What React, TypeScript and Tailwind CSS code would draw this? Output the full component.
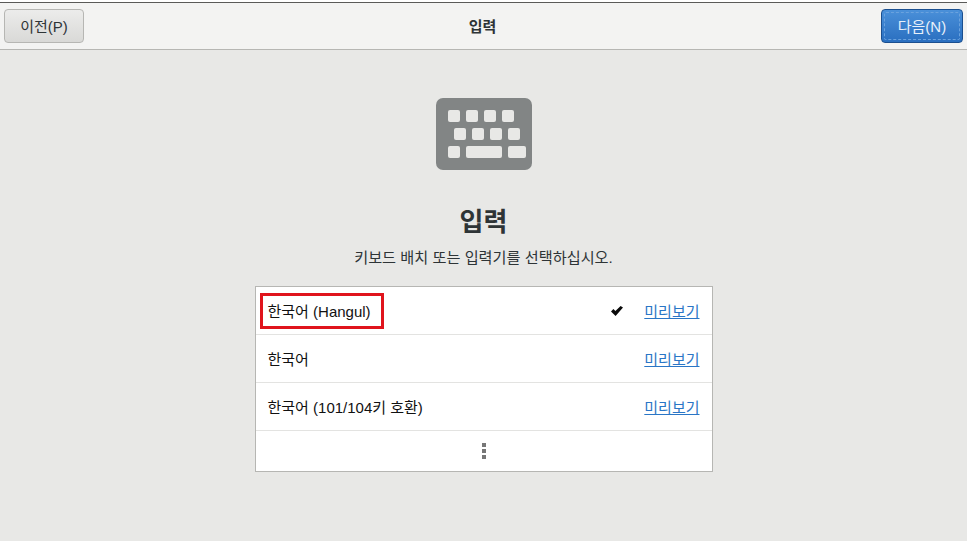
import React from 'react';

const FONT = "font-['Liberation_Sans','Noto_Sans_CJK_KR',sans-serif]";

const LAYOUTS = [
  { name: '한국어 (Hangul)', checked: true, marked: true },
  { name: '한국어', checked: false, marked: false },
  { name: '한국어 (101/104키 호환)', checked: false, marked: false },
];

const KeyboardIcon = () => (
  <svg width="96" height="72" viewBox="0 0 96 72" className="block">
    <rect width="96" height="72" rx="7" fill="#828585" />
    <g fill="#e8e8e6">
      <rect x="12" y="12" width="12" height="12" rx="2" />
      <rect x="30" y="12" width="12" height="12" rx="2" />
      <rect x="48" y="12" width="12" height="12" rx="2" />
      <rect x="66" y="12" width="12" height="12" rx="2" />
      <rect x="18" y="30" width="12" height="12" rx="2" />
      <rect x="36" y="30" width="12" height="12" rx="2" />
      <rect x="54" y="30" width="12" height="12" rx="2" />
      <rect x="72" y="30" width="12" height="12" rx="2" />
      <rect x="12" y="48" width="12" height="12" rx="2" />
      <rect x="30" y="48" width="36" height="12" rx="2" />
      <rect x="72" y="48" width="18" height="12" rx="2" />
    </g>
  </svg>
);

const Check = () => (
  <svg width="12" height="10" viewBox="0 0 12 10" className="block">
    <path d="M0 5.4 L2.4 3 L4.4 5 L9.6 0 L12 1.6 L4.6 10 Z" fill="#0a0a0a" />
  </svg>
);

export default function App() {
  return (
    <div className={`w-[967px] h-[541px] overflow-hidden flex flex-col bg-[#e8e8e6] text-[#2e3436] ${FONT}`}>
      <div className="h-[2px] shrink-0 bg-white" />
      <header className="h-[48px] shrink-0 flex items-center justify-between pl-1 pr-[4px] border-t border-t-[#5a5a58] border-b border-b-[#b6b6b3] bg-[#f3f3f2]">
        <button className="w-[80px] h-[34px] pt-[3px] rounded-[4px] border border-[#b6b6b3] bg-gradient-to-b from-[#ececeb] to-[#d9d9d7] text-[15px] text-[#2e3436]">
          이전(P)
        </button>
        <span className="pt-[2px] text-[15px] font-bold">입력</span>
        <button className="w-[82px] h-[34px] p-[2px] rounded-[4px] border border-[#1b4f8f] bg-gradient-to-b from-[#4a90d9] to-[#2a6fc0] text-[15px] text-[#e8f0fa]">
          <span className="flex h-full pt-[2px] items-center justify-center rounded-[2px] border border-dashed border-[#6aa2de]">다음(N)</span>
        </button>
      </header>

      <main className="flex-1 flex flex-col items-center pt-[48px]">
        <KeyboardIcon />
        <h1 className="mt-[34px] text-[26px] leading-[36px] font-bold text-[#2e3436]">입력</h1>
        <p className="mt-[8px] text-[15.2px] leading-[20px] text-[#2e3436]">키보드 배치 또는 입력기를 선택하십시오.</p>

        <div className="mt-[18px] w-[458px] bg-white border border-[#b6b6b3]">
          {LAYOUTS.map((l) => (
            <div key={l.name} className="relative h-[48px] flex items-center pl-[12px] pr-[12px] border-b border-[#e3e3e1] text-[15px] text-[#111]">
              {l.marked && <div className="absolute left-[4px] top-[6px] w-[124px] h-[36px] border-[3px] border-[#e0141c]" />}
              <span className="pt-[4px]">{l.name}</span>
              <div className="ml-auto flex items-center gap-[21px]">
                {l.checked && <Check />}
                <a className="pt-[4px] text-[#2a76c6] underline">미리보기</a>
              </div>
            </div>
          ))}
          <div className="h-[40px] flex flex-col items-center justify-center gap-[2px]">
            <span className="w-1 h-1 bg-[#777]" />
            <span className="w-1 h-1 bg-[#777]" />
            <span className="w-1 h-1 bg-[#777]" />
          </div>
        </div>
      </main>
    </div>
  );
}
